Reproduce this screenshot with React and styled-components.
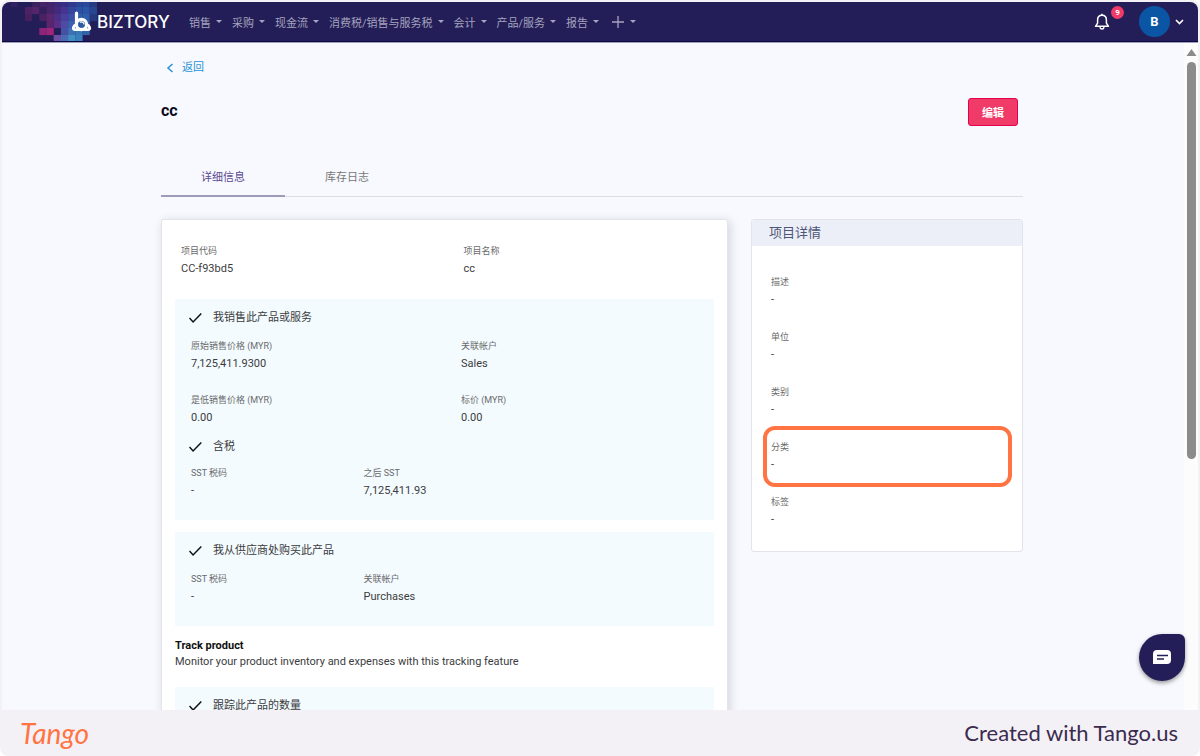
import React from "react"
import styled, { createGlobalStyle, css } from "styled-components"

const GlobalStyle = createGlobalStyle`
  * {
    box-sizing: border-box;
  }
  body {
    margin: 0;
    background: #fff;
    color: #3c3c40;
    font-family: Roboto, "Noto Sans CJK SC", sans-serif;
    font-size: 11px;
    line-height: 16px;
  }
  h1, h2, h3, p, dl, dd, ul {
    margin: 0;
    padding: 0;
  }
  a {
    color: inherit;
    text-decoration: none;
  }
  button {
    font-family: inherit;
    cursor: pointer;
  }
`

const Frame = styled.div`
  display: flex;
  flex-direction: column;
  height: 100vh;
  padding: 2px 2px 0;
  border-radius: 8px;
  background: #f3f1f6;
  overflow: hidden;
`

const TopBar = styled.header`
  display: flex;
  align-items: center;
  flex-shrink: 0;
  height: 40px;
  padding-right: 14px;
  border-bottom: 1px solid #0d0848;
  border-radius: 8px 8px 0 0;
  background: #231e57;
  overflow: hidden;
`

const Brand = styled.a`
  display: flex;
  align-items: center;
  height: 40px;
  width: 187px;
  color: #fff;
  font-family: Inter, sans-serif;
  font-size: 17px;
  font-weight: 500;
  svg {
    flex-shrink: 0;
  }
`

const Nav = styled.nav`
  display: flex;
  flex: 1;
  gap: 11px;
`

const NavButton = styled.button`
  display: flex;
  align-items: center;
  gap: 5px;
  height: 20px;
  padding: 0;
  border: 0;
  background: none;
  color: #a6a3bf;
  font-size: 11px;
  white-space: nowrap;
  &::after {
    content: "";
    border: solid transparent;
    border-width: 3px 3px 0;
    border-top-color: #a6a3bf;
    width: 0;
    margin-right: -1px;
  }
`

const BellButton = styled.button`
  position: relative;
  display: flex;
  margin-right: 28px;
  padding: 0;
  border: 0;
  background: none;
`

const Badge = styled.span`
  position: absolute;
  top: -7px;
  right: -13px;
  width: 13px;
  height: 13px;
  border-radius: 50%;
  background: #f03a67;
  color: #fff;
  font-size: 8px;
  font-weight: 700;
  line-height: 13px;
  text-align: center;
`

const AccountButton = styled.button`
  display: flex;
  align-items: center;
  gap: 5px;
  padding: 0;
  border: 0;
  background: none;
`

const Avatar = styled.span`
  width: 31px;
  height: 31px;
  border-radius: 50%;
  background: #0a56a5;
  color: #fff;
  font-size: 13px;
  font-weight: 700;
  line-height: 31px;
  text-align: center;
`

const Viewport = styled.div`
  display: flex;
  flex: 1;
  min-height: 0;
  border-top: 1px solid #a3a1b8;
  background: #f8f9fe;
`

const Page = styled.main`
  flex: 1;
  min-width: 0;
  padding: 0 161px 0 159px;
  overflow: hidden;
`

const ScrollTrack = styled.div`
  display: flex;
  flex-direction: column;
  align-items: center;
  gap: 6px;
  width: 14px;
  padding-top: 6px;
  background: #fcfcfd;
`

const ScrollThumb = styled.div`
  width: 9px;
  height: 60%;
  border-radius: 5px;
  background: #8b8b8b;
`

const BackLink = styled.a`
  display: inline-flex;
  align-items: center;
  gap: 7px;
  padding: 17px 0 0 5px;
  color: #2793d6;
`

const TitleRow = styled.div`
  display: flex;
  align-items: center;
  justify-content: space-between;
  margin-top: 20px;
  padding-right: 5px;
  h1 {
    padding-bottom: 2px;
    color: #0b0b1e;
    font-size: 16px;
    line-height: 20px;
    font-weight: 700;
  }
`

const EditButton = styled.button`
  height: 28px;
  padding: 0 13px;
  border: 1px solid #e3004f;
  border-radius: 3px;
  background: #f03a67;
  color: #fff;
  font-size: 11px;
  font-weight: 700;
`

const Tabs = styled.div`
  display: flex;
  margin-top: 33px;
  border-bottom: 1px solid #dcdee4;
`

const Tab = styled.button`
  height: 38px;
  margin-bottom: -1px;
  padding: 0 40px 2px;
  border: 0;
  border-bottom: 2px solid transparent;
  background: none;
  color: #777;
  font-size: 11px;
  ${props =>
    props.$active &&
    css`
      border-color: #a09bb8;
      color: #5b4a92;
    `}
`

const Columns = styled.div`
  display: grid;
  grid-template-columns: 25fr 12fr;
  align-items: start;
  gap: 23px;
  margin-top: 22px;
`

const Card = styled.section`
  border: 1px solid #e2e4ea;
  border-radius: 3px;
  background: #fff;
`

const MainCard = styled(Card)`
  padding: 23px 13px;
  box-shadow: 2px 2px 10px rgba(40, 40, 70, 0.18);
`

const SideCard = styled(Card)`
  padding-bottom: 22px;
  h2 {
    padding: 0 17px;
    background: #eceff7;
    color: #4c5578;
    font-size: 13px;
    font-weight: 400;
    line-height: 26px;
  }
`

const FieldGrid = styled.dl`
  display: grid;
  grid-template-columns: ${props => props.$columns};
  row-gap: 19px;
  padding-left: ${props => (props.$inset ? "16px" : "6px")};
`

const SideFields = styled.dl`
  display: flex;
  flex-direction: column;
  gap: 20px;
  padding: 28px 19px 0;
`

const FieldCell = styled.div`
  position: relative;
  dt {
    color: #6a6a6a;
    font-size: 9px;
    line-height: 17px;
  }
  dd {
    font-size: 11px;
    line-height: 18px;
  }
`

const HighlightRing = styled.span`
  position: absolute;
  inset: -13px -9px -13px -8px;
  border: 4px solid #ff7442;
  border-radius: 12px;
`

const Panel = styled.section`
  margin-top: ${props => props.$gap}px;
  padding: 9px 0 20px;
  background: #f3fbff;
`

const CheckLine = styled.h3`
  display: flex;
  align-items: center;
  gap: 11px;
  padding: 0 14px;
  margin: ${props => (props.$nested ? "10px 0 8px" : "0 0 10px")};
  font-size: 11px;
  font-weight: 400;
  line-height: 20px;
`

const Tracking = styled.div`
  margin: 12px 0 17px;
  h3 {
    color: #111;
    font-size: 11px;
    font-weight: 700;
  }
`

const ChatButton = styled.button`
  position: fixed;
  right: 15px;
  bottom: 75px;
  display: flex;
  align-items: center;
  justify-content: center;
  width: 46px;
  height: 47px;
  padding: 0;
  border: 0;
  border-radius: 50% 6px 50% 50%;
  background: #231e57;
  box-shadow: 0 2px 4px rgba(0, 0, 0, 0.4);
`

const Footer = styled.footer`
  display: flex;
  align-items: center;
  justify-content: space-between;
  flex-shrink: 0;
  height: 46px;
  padding: 0 20px 0 18px;
  color: #3b2b4f;
  font-family: Lato, sans-serif;
  font-size: 22px;
`

const TangoMark = styled.a`
  color: #ff7442;
  font-size: 28px;
  font-style: italic;
  font-weight: 400;
`

const navItems = ["销售", "采购", "现金流", "消费税/销售与服务税", "会计", "产品/服务", "报告"]

// [column, row, colour] on a 7px grid
const pixels = [
  [0, 0, "#322060"], [3, 0, "#3a2360"], [4, 0, "#472468"], [5, 0, "#40256c"], [6, 0, "#3c2a78"],
  [7, 0, "#332f85"], [8, 0, "#30388f"], [9, 0, "#2a4498"], [10, 0, "#29479b"], [11, 0, "#263b82"],
  [2, 1, "#4c2166"], [3, 1, "#55256c"], [4, 1, "#35205e"], [5, 1, "#47256a"], [6, 1, "#432a7a"],
  [7, 1, "#463492"], [8, 1, "#34469c"], [9, 1, "#2c50a4"], [10, 1, "#2b55a6"], [11, 1, "#27468f"],
  [2, 2, "#44205f"], [4, 2, "#4c2163"], [5, 2, "#5c266e"], [6, 2, "#4c2f86"],
  [7, 2, "#48409c"], [8, 2, "#3850a5"], [9, 2, "#315eab"], [10, 2, "#2f5fab"], [11, 2, "#26397f"],
  [5, 3, "#5a256d"], [6, 3, "#5a2f88"], [7, 3, "#4f4ba4"], [8, 3, "#3b62b0"], [9, 3, "#3a6ab3"], [10, 3, "#325fa9"],
  [4, 4, "#8f2377"], [5, 4, "#9c277a"], [7, 4, "#4551a5"], [8, 4, "#3e70b6"], [9, 4, "#3679b9"], [10, 4, "#3063a9"],
  [6, 5, "#6d4fa4"], [7, 5, "#4a6bb3"], [8, 5, "#4190c2"], [9, 5, "#397fbd"],
]

const BrandMark = () => (
  <svg width="95" height="40" viewBox="0 0 95 40">
    {pixels.map(([col, row, fill]) => (
      <rect key={`${col}-${row}`} x={8.5 + col * 7.2} y={row * 7 - 2} width="7.3" height="7.1" fill={fill} />
    ))}
    <g fill="none" stroke="#fff" strokeLinecap="round">
      <path d="M74.500 11v13" strokeWidth="3.200" />
      <circle cx="79.500" cy="22.500" r="5" strokeWidth="3.400" />
      <path d="M72.500 23.500c-1.800 2.300-1.600 4.200.5 4.200h3M86.500 23.500c1.800 2.300 1.600 4.200-.5 4.200h-3" strokeWidth="2.800" />
    </g>
    <circle cx="79.500" cy="22.500" r="3.300" fill="#2f5aa3" />
    <path d="M78 20.500a2.500 2.500 0 0 1 4 2" fill="none" stroke="#fff" strokeWidth="1.200" />
  </svg>
)

const Check = () => (
  <svg width="13" height="12" viewBox="0 0 13 12">
    <path d="M.5 6l3.600 4L12.300 1.500" fill="none" stroke="#111" strokeWidth="1.500" />
  </svg>
)

const Field = ({ label, value, highlighted }) => (
  <FieldCell>
    <dt>{label}</dt>
    <dd>{value}</dd>
    {highlighted && <HighlightRing />}
  </FieldCell>
)

const App = () => (
  <>
    <GlobalStyle />
    <Frame>
      <TopBar>
        <Brand href="#">
          <BrandMark />
          BIZTORY
        </Brand>
        <Nav>
          {navItems.map(item => (
            <NavButton key={item}>{item}</NavButton>
          ))}
          <NavButton aria-label="新增">
            <svg width="16" height="14" viewBox="0 0 16 14">
              <path d="M9 1v12M3 7h12" stroke="#a6a3bf" strokeWidth="1.300" />
            </svg>
          </NavButton>
        </Nav>
        <BellButton aria-label="通知">
          <svg width="18" height="18" viewBox="0 0 18 18" fill="none" stroke="#fff" strokeWidth="1.500" strokeLinejoin="round">
            <path d="M9 2.200C5.800 2.200 4.600 4.600 4.600 7v3.200L2.500 13.300h13l-2.100-3.100V7c0-2.400-1.200-4.800-4.400-4.800z" />
            <path d="M9 .8v1.400M7 14.200c.3 2.500 3.700 2.500 4 0" />
          </svg>
          <Badge>9</Badge>
        </BellButton>
        <AccountButton>
          <Avatar>B</Avatar>
          <svg width="9" height="6" viewBox="0 0 9 6">
            <path d="M1 1l3.500 3.500L8 1" fill="none" stroke="#fff" strokeWidth="1.600" />
          </svg>
        </AccountButton>
      </TopBar>
      <Viewport>
        <Page>
          <BackLink href="#">
            <svg width="9" height="10" viewBox="0 0 9 10">
              <path d="M6.500 1l-4.500 4 4.500 4" fill="none" stroke="#2793d6" strokeWidth="1.500" />
            </svg>
            返回
          </BackLink>
          <TitleRow>
            <h1>cc</h1>
            <EditButton>编辑</EditButton>
          </TitleRow>
          <Tabs role="tablist">
            <Tab role="tab" aria-selected="true" $active>详细信息</Tab>
            <Tab role="tab" aria-selected="false">库存日志</Tab>
          </Tabs>
          <Columns>
            <MainCard>
              <FieldGrid $columns="53% 1fr">
                <Field label="项目代码" value="CC-f93bd5" />
                <Field label="项目名称" value="cc" />
              </FieldGrid>
              <Panel $gap={21}>
                <CheckLine><Check />我销售此产品或服务</CheckLine>
                <FieldGrid $inset $columns="270px 1fr">
                  <Field label="原始销售价格 (MYR)" value="7,125,411.9300" />
                  <Field label="关联帐户" value="Sales" />
                  <Field label="是低销售价格 (MYR)" value="0.00" />
                  <Field label="标价 (MYR)" value="0.00" />
                </FieldGrid>
                <CheckLine $nested><Check />含税</CheckLine>
                <FieldGrid $inset $columns="33% 1fr">
                  <Field label="SST 税码" value="-" />
                  <Field label="之后 SST" value="7,125,411.93" />
                </FieldGrid>
              </Panel>
              <Panel $gap={12}>
                <CheckLine><Check />我从供应商处购买此产品</CheckLine>
                <FieldGrid $inset $columns="33% 1fr">
                  <Field label="SST 税码" value="-" />
                  <Field label="关联帐户" value="Purchases" />
                </FieldGrid>
              </Panel>
              <Tracking>
                <h3>Track product</h3>
                <p>Monitor your product inventory and expenses with this tracking feature</p>
              </Tracking>
              <Panel $gap={0}>
                <CheckLine><Check />跟踪此产品的数量</CheckLine>
              </Panel>
            </MainCard>
            <SideCard>
              <h2>项目详情</h2>
              <SideFields>
                <Field label="描述" value="-" />
                <Field label="单位" value="-" />
                <Field label="类别" value="-" />
                <Field label="分类" value="-" highlighted />
                <Field label="标签" value="-" />
              </SideFields>
            </SideCard>
          </Columns>
        </Page>
        <ScrollTrack>
          <svg width="11" height="7" viewBox="0 0 11 7">
            <path d="M5.500 0L10.500 7H.5z" fill="#8b8b8b" />
          </svg>
          <ScrollThumb />
        </ScrollTrack>
      </Viewport>
      <Footer>
        <TangoMark href="#">Tango</TangoMark>
        <span>Created with Tango.us</span>
      </Footer>
    </Frame>
    <ChatButton aria-label="聊天">
      <svg width="18" height="15" viewBox="0 0 18 15">
        <path d="M4 0h10a4 4 0 0 1 4 4v6a4 4 0 0 1-4 4H0V4a4 4 0 0 1 4-4z" fill="#fff" />
        <path d="M4 5.500h11M4 9h7" stroke="#231e57" strokeWidth="1.500" />
      </svg>
    </ChatButton>
  </>
)

export default App
